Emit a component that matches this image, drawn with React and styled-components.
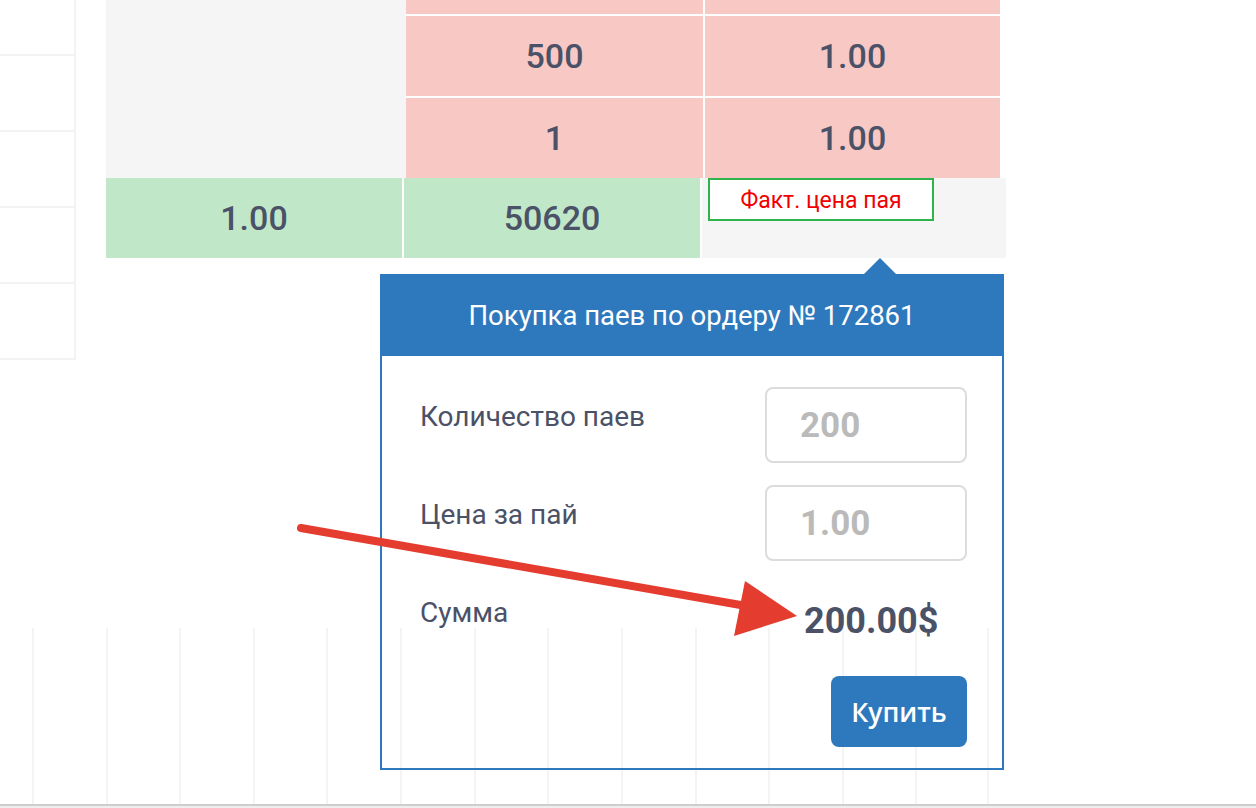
import React from "react";
import styled, { createGlobalStyle } from "styled-components";

const Global = createGlobalStyle`
  html, body { margin: 0; padding: 0; background: #fff; }
  body { font-family: Roboto, "Noto Sans", sans-serif; }
  * { box-sizing: border-box; }
`;

const Page = styled.div`
  position: relative;
  width: 1256px;
  height: 808px;
  overflow: hidden;
  background: #fff;
  display: flex;
  flex-direction: column;
`;

const TopArea = styled.div`
  display: flex;
  align-items: flex-start;
  gap: 30px;
  height: 360px;
`;

const SideTable = styled.div`
  width: 76px;
  border-right: 2px solid #f3f3f3;
  display: flex;
  flex-direction: column;
`;

const SideRow = styled.div`
  height: ${(p) => p.$h}px;
  border-bottom: 2px solid #f3f3f3;
`;

const MainTable = styled.div`
  display: flex;
  flex-direction: column;
`;

const UpperGrid = styled.div`
  display: grid;
  grid-template-columns: 300px 297px 297px;
  grid-template-rows: 16px 82px 80px;
`;

const EmptyCell = styled.div`
  grid-row: 1 / span 3;
  background: #f5f5f5;
`;

const Cell = styled.div`
  display: flex;
  align-items: center;
  justify-content: center;
  font-size: 34px;
  font-weight: 500;
  color: #4b5166;
  background: ${(p) => p.$bg};
  border-bottom: ${(p) => (p.$last ? "none" : "2px solid #fff")};
  border-left: ${(p) => (p.$sep ? "2px solid #fff" : "none")};
`;

const LowerGrid = styled.div`
  display: grid;
  grid-template-columns: 296px 296px 304px;
  column-gap: 2px;
  height: 80px;
`;

const NoteCell = styled.div`
  background: #f5f5f5;
  padding-left: 6px;
`;

const FactBox = styled.div`
  width: 226px;
  height: 43px;
  border: 2px solid #2fb44d;
  background: #fff;
  color: #f00000;
  font-size: 23px;
  padding-top: 2px;
  display: flex;
  align-items: center;
  justify-content: center;
`;

const BottomGrid = styled.div`
  margin-top: 268px;
  margin-left: 32px;
  width: 957px;
  height: 176px;
  display: grid;
  grid-template-columns: repeat(13, 1fr);
`;

const GridCol = styled.div`
  border-left: 2px solid #f4f4f4;
  border-right: ${(p) => (p.$last ? "2px solid #f4f4f4" : "none")};
`;

const Footer = styled.div`
  height: 4px;
  border-top: 2px solid #cdcdcd;
  background: #efefef;
`;

const Popover = styled.div`
  position: absolute;
  left: 380px;
  top: 258px;
  width: 624px;
  display: flex;
  flex-direction: column;
`;

const Arrow = styled.div`
  align-self: flex-start;
  margin-left: 484px;
  width: 0;
  height: 0;
  border-left: 16px solid transparent;
  border-right: 16px solid transparent;
  border-bottom: 16px solid #2e79bd;
`;

const Header = styled.div`
  height: 82px;
  background: #2e79bd;
  color: #fff;
  font-size: 27.5px;
  display: flex;
  align-items: center;
  justify-content: center;
`;

const Body = styled.div`
  border: 2px solid #2e79bd;
  border-top: none;
  padding: 31px 35px 21px 38px;
  display: grid;
  grid-template-columns: 1fr 202px;
  row-gap: 22px;
`;

const Label = styled.div`
  font-size: 28px;
  color: #4b5166;
  padding-top: 13px;
  height: 76px;
`;

const Field = styled.div`
  height: 76px;
  border: 2px solid #dcdcdc;
  border-radius: 8px;
  padding-left: 33px;
  display: flex;
  align-items: center;
  font-size: 35px;
  font-weight: 700;
  color: #bababa;
`;

const Total = styled.div`
  height: 76px;
  padding-left: 39px;
  display: flex;
  align-items: center;
  font-size: 36px;
  font-weight: 700;
  color: #4b5166;
`;

const Actions = styled.div`
  grid-column: 1 / span 2;
  display: flex;
  justify-content: flex-end;
  margin-top: -5px;
`;

const BuyButton = styled.button`
  width: 136px;
  height: 71px;
  border: none;
  border-radius: 8px;
  background: #2e79bd;
  color: #fff;
  font-family: "Open Sans", "Noto Sans", sans-serif;
  font-weight: 600;
  font-size: 26.5px;
  cursor: pointer;
`;

const Annotation = styled.svg`
  position: absolute;
  left: 0;
  top: 0;
  pointer-events: none;
`;

const pink = "#f7c8c4";
const green = "#c0e8c8";

export default function App() {
  return (
    <>
      <Global />
      <Page>
        <TopArea>
          <SideTable>
            <SideRow $h={56} />
            <SideRow $h={76} />
            <SideRow $h={76} />
            <SideRow $h={76} />
            <SideRow $h={76} />
          </SideTable>
          <MainTable>
            <UpperGrid>
              <EmptyCell />
              <Cell $bg={pink} />
              <Cell $bg={pink} $sep />
              <Cell $bg={pink}>500</Cell>
              <Cell $bg={pink} $sep>1.00</Cell>
              <Cell $bg={pink} $last>1</Cell>
              <Cell $bg={pink} $sep $last>1.00</Cell>
            </UpperGrid>
            <LowerGrid>
              <Cell $bg={green} $last>1.00</Cell>
              <Cell $bg={green} $last>50620</Cell>
              <NoteCell>
                <FactBox>Факт. цена пая</FactBox>
              </NoteCell>
            </LowerGrid>
          </MainTable>
        </TopArea>
        <BottomGrid>
          {Array.from({ length: 13 }).map((_, i) => (
            <GridCol key={i} $last={i === 12} />
          ))}
        </BottomGrid>
        <Footer />

        <Popover>
          <Arrow />
          <Header>Покупка паев по ордеру № 172861</Header>
          <Body>
            <Label>Количество паев</Label>
            <Field>200</Field>
            <Label>Цена за пай</Label>
            <Field>1.00</Field>
            <Label>Сумма</Label>
            <Total>200.00$</Total>
            <Actions>
              <BuyButton>Купить</BuyButton>
            </Actions>
          </Body>
        </Popover>

        <Annotation width="1256" height="808" viewBox="0 0 1256 808">
          <line x1="301" y1="528" x2="752" y2="607" stroke="#e53c30" strokeWidth="8" strokeLinecap="round" />
          <polygon points="745,581 797,616 734,636" fill="#e53c30" />
        </Annotation>
      </Page>
    </>
  );
}
